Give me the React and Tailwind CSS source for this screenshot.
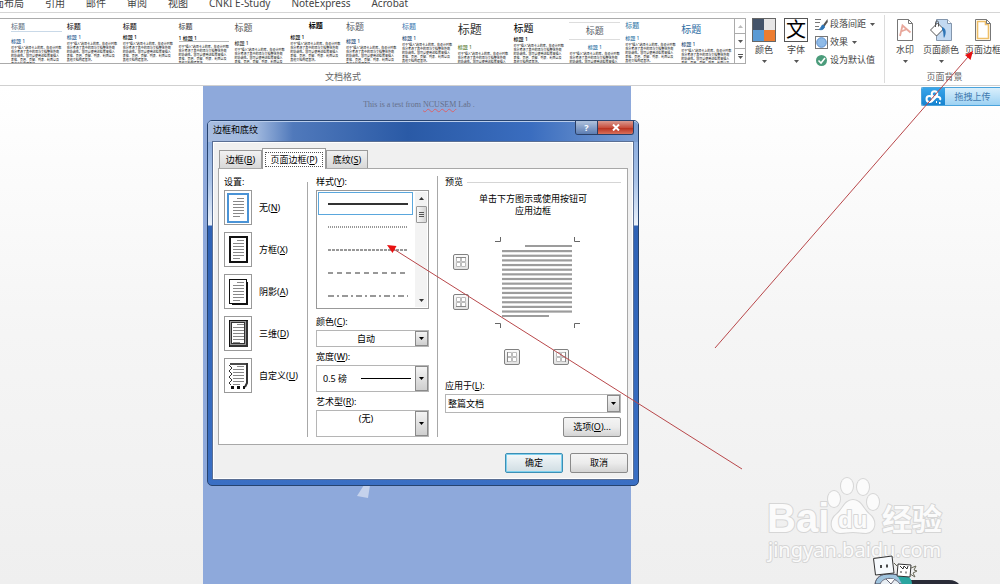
// src/App.jsx
/**
 * Word processor window: ribbon on top, document canvas below,
 * "Borders and Shading" dialog open over the page.
 */
import { useState } from "react";

const MENU = ["页面布局", "引用", "邮件", "审阅", "视图", "CNKI E-Study", "NoteExpress", "Acrobat"];

const SAMPLE =
  "对于“插入”选项卡上的库，在设计时都充分考虑了其中的项与文档整体外观的协调性。您可以使用这些库来插入表格、页眉、页脚、列表、封面以及其他文档构建基块。";

const THEMES = [
  { title: "mt-1 text-[7px] leading-[8px] text-[#5b6b80] border-b border-[#c9d9e8]", head: "mt-[6px] text-[#2e5f94]" },
  { title: "mt-1 text-[7px] leading-[8px] text-black", head: "mt-[3px] text-[#2e5f94]" },
  { title: "mt-1 text-[7px] leading-[8px] text-black", head: "mt-[3px] text-black" },
  { title: "mt-1 text-[7px] leading-[8px] text-[#333]", head: "mt-1 mb-px text-black border-b border-[#bbb]", num: true },
  { title: "mt-1 text-[9px] leading-[10px] text-[#555]", head: "mt-[7px] text-[#333]" },
  { title: "mt-[3px] text-[7px] leading-[8px] text-black font-bold text-center", head: "mt-1 text-black" },
  { title: "mt-[3px] text-[9px] leading-[10px] text-[#555a66]", head: "mt-[6px] text-[#1f4e79]" },
  { title: "mt-1 text-[7px] leading-[8px] text-[#3a76b0]", head: "mt-1 text-[#1f4e79]" },
  { title: "mt-[5px] text-[12px] leading-[12px] text-[#333]", head: "mt-2 text-[#5a7d35]" },
  { title: "mt-1 text-[10px] leading-[10px] text-black", head: "mt-[3px] text-black" },
  { title: "mt-[3px] text-[9px] leading-[16px] text-[#555a66] text-center border-y border-[#ddd]", head: "mt-1 text-[#2e74a5] text-center" },
  { title: "mt-[3px] text-[7px] leading-[8px] text-[#2e74a5]", head: "mt-[5px] text-[#2e74a5]" },
  { title: "mt-[5px] text-[10px] leading-[10px] text-[#2e6da4]", head: "mt-[7px] text-[#1f4e79]" },
];

const SETTINGS = [
  { id: "none", name: "无", k: "N" },
  { id: "box", name: "方框", k: "X" },
  { id: "shadow", name: "阴影", k: "A" },
  { id: "threeD", name: "三维", k: "D" },
  { id: "custom", name: "自定义", k: "U" },
];

const LINE_STYLES = [
  { id: "solid", dash: "none" },
  { id: "dotted", dash: "1 1" },
  { id: "short", dash: "3 1" },
  { id: "dash", dash: "5 4" },
  { id: "dashdot", dash: "6 3 2 3" },
];

function Caret({ className = "" }) {
  return (
    <svg width="5" height="3" viewBox="0 0 5 3" className={`shrink-0 ${className}`}>
      <path d="M0 0h5L2.5 3z" fill="currentColor" />
    </svg>
  );
}

// label with the access key underlined: 名称(K)
function Key({ name, k, end = "" }) {
  return (
    <>
      {name}(<u>{k}</u>){end}
    </>
  );
}

// ── Ribbon ───────────────────────────────────────────────────────────────

function ThemeThumb({ theme }) {
  return (
    <button className="min-w-0 overflow-hidden pl-[3px] pr-[2px] flex flex-col text-left">
      <span className={`w-full shrink-0 ${theme.title}`}>标题</span>
      <span className={`w-full shrink-0 text-[5px] leading-[6px] font-medium ${theme.head}`}>
        {theme.num ? "1 标题 1" : "标题 1"}
      </span>
      <span className="mt-[2px] text-[3px] leading-[4px] text-black">{SAMPLE}</span>
    </button>
  );
}

function BigButton({ label, icon, caret = true, className }) {
  return (
    <button className={`flex flex-col items-center shrink-0 pt-[3px] whitespace-nowrap ${className}`}>
      {icon}
      <span className="mt-[2px] leading-3">{label}</span>
      {caret && <Caret className="mt-1 text-[#555]" />}
    </button>
  );
}

function SmallButton({ label, icon, caret = true }) {
  return (
    <button className="flex h-[18px] items-center whitespace-nowrap">
      {icon}
      <span className="ml-[2px]">{label}</span>
      {caret && <Caret className="ml-1 text-[#555]" />}
    </button>
  );
}

const ColorsIcon = (
  <svg width="26" height="24" viewBox="0 0 26 24">
    <rect x="1" y="0" width="12" height="12" fill="#44546a" />
    <rect x="13" y="0" width="12" height="12" fill="#e7e6e6" />
    <rect x="1" y="12" width="12" height="12" fill="#5b9bd5" />
    <rect x="13" y="12" width="12" height="12" fill="#ed7d31" />
    <rect x="1.5" y=".5" width="23" height="23" fill="none" stroke="#666" />
  </svg>
);

const FontIcon = (
  <span className="flex h-6 w-6 items-center justify-center border border-[#555] bg-white text-[20px] leading-none text-black">
    文
  </span>
);

const SpacingIcon = (
  <svg width="13" height="13" viewBox="0 0 13 13">
    <path d="M0 1.5h6M0 4.5h5M0 8.5h4M0 11.5h4" stroke="#777" />
    <path d="M12.500 1L8 7l1.500 1.500L12.800 4z" fill="#555" />
    <path d="M8 7c-2 0-1 3-4 4.500 3 .8 5.500-.5 5.500-3z" fill="#2e75b6" stroke="#2e75b6" />
  </svg>
);

const EffectsIcon = (
  <svg width="13" height="13" viewBox="0 0 13 13">
    <rect x=".5" y=".5" width="12" height="12" fill="#fff" stroke="#777" />
    <circle cx="6.500" cy="6.500" r="4.800" fill="#8fbbe8" stroke="#5b8fd0" />
  </svg>
);

const CheckIcon = (
  <svg width="13" height="13" viewBox="0 0 13 13">
    <circle cx="6.500" cy="6.500" r="5.500" fill="#4b9c7b" />
    <path d="M3.500 6.500L6 9l4-5" fill="none" stroke="#fff" strokeWidth="1.600" />
  </svg>
);

const WatermarkIcon = (
  <svg width="20" height="24" viewBox="0 0 20 24">
    <path d="M2.500 1.500h11l4 4v17h-15z" fill="#fff" stroke="#777" />
    <path d="M13.500 1.500v4h4" fill="none" stroke="#777" />
    <path d="M5 18L7.500 7.500l8 7M6 13.500l5-2" fill="none" stroke="#e8a79b" strokeWidth="1.800" />
  </svg>
);

const PageColorIcon = (
  <svg width="24" height="24" viewBox="0 0 24 24">
    <path d="M7.500 1.500h11l4 4v17h-15z" fill="#c3d9f1" stroke="#8496ac" />
    <path d="M18.500 1.500v4h4" fill="#fff" stroke="#8496ac" />
    <path d="M1.500 12l7-7 6 6-7 7z" fill="#fff" stroke="#555" />
    <path d="M6.500 9V4.500c0-2 3-2 3 0v4" fill="none" stroke="#555" />
    <path d="M13 9c4 1 5 6 2 11-1-3 0-6-2-8z" fill="#2e75b6" />
  </svg>
);

const PageBorderIcon = (
  <svg width="20" height="24" viewBox="0 0 20 24">
    <path d="M2.500 1.500h11l4 4v17h-15z" fill="#fff" stroke="#777" />
    <path d="M4.500 3.500h8v3h3v14h-11z" fill="none" stroke="#eebf68" strokeWidth="1.600" />
    <path d="M13.500 1.500v4h4" fill="none" stroke="#777" />
  </svg>
);

function Ribbon() {
  return (
    <header className="border-b border-[#d0d0d0] bg-white text-[9px] text-[#444]">
      <nav className="-ml-4 flex h-[13px] gap-[21px] overflow-hidden border-b border-[#d5d5d5] text-[10px]">
        {MENU.map((m) => (
          <button key={m} className="-mt-[3px] h-3 shrink-0 leading-3">
            {m}
          </button>
        ))}
      </nav>

      <div className="flex overflow-hidden pb-[2px]">
        {/* ── Document formatting ───────────────────────────────────────── */}
        <section className="mt-[2px] min-w-0 flex-1 border-r border-[#dcdcdc]">
          <div className="flex h-[54px]">
            <div className="mt-[3px] flex h-[46px] min-w-0 flex-1 border border-l-0 border-[#ababab] bg-white">
              <div className="grid min-w-0 flex-1 overflow-hidden pl-2 [grid-template-columns:repeat(13,minmax(0,1fr))]">
                {THEMES.map((t, i) => (
                  <ThemeThumb key={i} theme={t} />
                ))}
              </div>
              <div className="flex w-[11px] flex-col divide-y divide-[#ababab] border-l border-[#ababab]">
                <button aria-label="上一行" className="flex flex-1 items-center justify-center text-[#bbb]">
                  <Caret className="rotate-180" />
                </button>
                <button aria-label="下一行" className="flex flex-1 items-center justify-center text-[#555]">
                  <Caret />
                </button>
                <button aria-label="其他" className="flex flex-1 flex-col items-center justify-center gap-px text-[#555]">
                  <span className="h-px w-[5px] bg-[#555]" />
                  <Caret />
                </button>
              </div>
            </div>
            <BigButton label="颜色" icon={ColorsIcon} className="ml-[2px] w-8" />
            <BigButton label="字体" icon={FontIcon} className="w-8" />
            <div className="ml-[3px] w-[69px] shrink-0">
              <SmallButton label="段落间距" icon={SpacingIcon} />
              <SmallButton label="效果" icon={EffectsIcon} />
              <SmallButton label="设为默认值" icon={CheckIcon} caret={false} />
            </div>
          </div>
          <p className="mt-[2px] pl-[325px] leading-3 text-[#666]">文档格式</p>
        </section>

        {/* ── Page background ───────────────────────────────────────────── */}
        <section className="mt-[2px] w-[115px] shrink-0 overflow-hidden">
          <div className="flex h-[54px] pl-[5px]">
            <BigButton label="水印" icon={WatermarkIcon} className="w-[30px]" />
            <BigButton label="页面颜色" icon={PageColorIcon} className="w-[42px]" />
            <BigButton label="页面边框" icon={PageBorderIcon} caret={false} className="w-[42px]" />
          </div>
          <p className="mt-[2px] pl-1 text-center leading-3 text-[#666]">页面背景</p>
        </section>
      </div>
    </header>
  );
}

// ── Dialog parts ─────────────────────────────────────────────────────────

function SettingIcon({ id }) {
  return (
    <svg width="26" height="33" viewBox="0 0 26 33">
      {id === "none" && <rect x="3" y="3" width="20" height="28" fill="#fff" stroke="#4a93d6" strokeWidth="2" />}
      {id === "box" && <rect x="5" y="4" width="17" height="25" fill="#fff" stroke="#111" strokeWidth="2" />}
      {id === "shadow" && (
        <>
          <path d="M7 29h15V7" fill="none" stroke="#111" strokeWidth="2" />
          <rect x="4.500" y="4.500" width="17" height="24" fill="#fff" stroke="#111" />
        </>
      )}
      {id === "threeD" && (
        <>
          <rect x="4.500" y="3.500" width="18" height="26" fill="#999" stroke="#111" />
          <rect x="6.500" y="5.500" width="13" height="21" fill="#fff" stroke="#333" />
          <path d="M5 29h17V4" fill="none" stroke="#333" strokeWidth="2" />
        </>
      )}
      {id === "custom" && (
        <>
          <path d="M5 5h17" stroke="#111" strokeWidth="1.500" />
          <path d="M22 4v20l-2 4" fill="none" stroke="#333" strokeWidth="2" />
          <path d="M4 6l3 3-3 3 3 3-3 3 3 3-3 3 2 2" fill="none" stroke="#333" />
          <path d="M6 28.500h14" stroke="#111" strokeWidth="3" strokeDasharray="3 3" />
        </>
      )}
      <path d="M12 7.500h7M8 10.500h11M8 13.500h11M8 16.500h11M8 19.500h11M8 22.500h11M8 25.500h7" stroke="#888" />
    </svg>
  );
}

function ComboArrow() {
  return (
    <span className="pointer-events-none flex w-[13px] shrink-0 items-center justify-center border border-[#8a8a8a] bg-linear-to-b from-[#f4f4f4] to-[#cfcfcf] text-black">
      <Caret />
    </span>
  );
}

function Combo({ id, label, options, className, selectClass, children }) {
  return (
    <div className="flex flex-col">
      <label htmlFor={id} className="mb-[2px] leading-3">
        {label}
      </label>
      <div className={`flex border border-[#b5b5b5] bg-white ${className}`}>
        <select id={id} className={`min-w-0 flex-1 appearance-none bg-transparent outline-none ${selectClass}`}>
          {options.map((o) => (
            <option key={o}>{o}</option>
          ))}
        </select>
        {children}
        <ComboArrow />
      </div>
    </div>
  );
}

function EdgeButton({ side, label }) {
  const edges = {
    top: "M2 2.500h10",
    bottom: "M2 11.500h10",
    left: "M2.500 2v10",
    right: "M11.500 2v10",
  };
  return (
    <button
      aria-label={label}
      className="flex h-4 w-4 items-center justify-center rounded-[2px] border border-[#808080] bg-linear-to-b from-[#fafafa] to-[#e2e2e2]"
    >
      <svg width="14" height="14" viewBox="0 0 14 14" className="shrink-0">
        <path d="M2.500 2.500h4v4h-4zM7.500 2.500h4v4h-4zM2.500 7.500h4v4h-4zM7.500 7.500h4v4h-4z" fill="#fff" stroke="#bbb" />
        <path d={edges[side]} stroke="#888" />
      </svg>
    </button>
  );
}

function PagePreview() {
  const rows = Array.from({ length: 14 }, (_, i) => 13 + i * 4.65);
  return (
    <svg width="85" height="91" viewBox="0 0 85 91" className="ml-[26px] shrink-0">
      <path d="M0 4.500h5.500V0M85 4.500h-5.500V0M0 86.500h5.500V91M85 86.500h-5.500V91" fill="none" stroke="#666" />
      <rect x="30" y="8" width="47" height="2" fill="#9c9c9c" />
      {rows.map((y) => (
        <rect key={y} x="7" y={y} width="70" height="2.200" fill="#9c9c9c" />
      ))}
      <rect x="7" y="78" width="47" height="2" fill="#9c9c9c" />
    </svg>
  );
}

function LineStyleList({ value, onChange }) {
  return (
    <div className="flex h-[119px] border border-[#999] bg-white p-px">
      <div role="listbox" aria-labelledby="style-label" className="flex-1">
        {LINE_STYLES.map((s) => (
          <button
            key={s.id}
            role="option"
            aria-label={s.id}
            aria-selected={value === s.id}
            onClick={() => onChange(s.id)}
            className={`flex h-[23px] w-full items-center justify-center border pl-1 ${value === s.id ? "border-[#5aa7dd]" : "border-transparent"}`}
          >
            <svg width="80" height="2" viewBox="0 0 80 2">
              <path d="M0 1h80" stroke="#333" strokeWidth={s.id === "solid" ? 2 : 1.2} strokeDasharray={s.dash} />
            </svg>
          </button>
        ))}
      </div>
      <div className="ml-[2px] flex w-3 flex-col items-center bg-[#f3f3f3] py-[5px]">
        <Caret className="rotate-180 text-[#333]" />
        <span className="mt-[6px] flex h-[17px] w-[11px] flex-col items-center justify-center gap-px rounded-[1px] border border-[#999] bg-linear-to-r from-[#f8f8f8] to-[#d5d5d5]">
          <i className="h-px w-[5px] bg-[#555]" />
          <i className="h-px w-[5px] bg-[#555]" />
          <i className="h-px w-[5px] bg-[#555]" />
        </span>
        <Caret className="mt-auto text-[#333]" />
      </div>
    </div>
  );
}

const BUTTON =
  "h-5 w-[58px] rounded-[2px] border border-[#8a8a8a] bg-linear-to-b from-[#f4f4f4] via-[#ececec] to-[#d4d4d4]";

function BordersDialog() {
  const [setting, setSetting] = useState("none");
  const [lineStyle, setLineStyle] = useState("solid");

  return (
    <div
      role="dialog"
      aria-labelledby="dialog-title"
      className="absolute left-[207px] top-[120px] w-[432px] rounded-[5px] border border-[#26436f] bg-[linear-gradient(180deg,#7fa3da_0,#a9c3e8_60px,#eaf1fa_104px,#2f62b5_105px,#3a6fc4_100%)] px-[5px] pb-[6px] text-[9px] text-black"
    >
      <div className="-mx-[5px] flex h-[21px] items-start rounded-t-[4px] border-t border-[#b9cdec] bg-[linear-gradient(90deg,#a7bcdf_0,#a0b8de_48px,#5079bb_85px,#2a5aa6_200px,#3a6dbf_75%,#7c9fd3_100%)] pl-[5px] pr-1">
        <h2 id="dialog-title" className="pt-[2px] leading-3">
          边框和底纹
        </h2>
        <div className="-mt-px ml-auto flex h-[14px] overflow-hidden rounded-b-[3px] border border-t-0 border-[#2a3f66] text-white">
          <button aria-label="帮助" className="flex w-[21px] items-center justify-center bg-linear-to-b from-[#b0c2dc] to-[#5c7db3] font-bold leading-none">
            ?
          </button>
          <button aria-label="关闭" className="flex w-9 items-center justify-center border-l border-[#2a3f66] bg-[linear-gradient(180deg,#d99a90_0,#c8503f_50%,#b52c1a_51%,#d9705a_100%)]">
            <svg width="8" height="7" viewBox="0 0 8 7">
              <path d="M1 .5l6 6M7 .5l-6 6" stroke="#fff" strokeWidth="2" />
            </svg>
          </button>
        </div>
      </div>

      <div className="border border-white bg-[#f0f0f0] px-1 pb-[5px] pt-[5px] outline outline-[#5a6f94]">
        {/* ── Tabs ──────────────────────────────────────────────────────── */}
        <div role="tablist" className="flex h-5 items-end pl-px">
          <button role="tab" className="h-[18px] w-[43px] border border-b-0 border-[#9a9a9a] bg-linear-to-b from-[#f2f2f2] to-[#d8d8d8]">
            <Key name="边框" k="B" />
          </button>
          <button role="tab" aria-selected="true" className="relative -mb-px h-[21px] w-16 border border-b-0 border-[#9a9a9a] bg-white p-[2px]">
            <span className="block border border-dotted border-[#555] leading-[13px]">
              <Key name="页面边框" k="P" />
            </span>
          </button>
          <button role="tab" className="h-[18px] w-[42px] border border-b-0 border-[#9a9a9a] bg-linear-to-b from-[#f2f2f2] to-[#d8d8d8]">
            <Key name="底纹" k="S" />
          </button>
        </div>

        <div className="flex border border-[#a8a8a8] bg-white py-[7px]">
          {/* ── Setting ─────────────────────────────────────────────────── */}
          <fieldset className="w-[89px] border-r border-[#a8a8a8] pl-[5px]">
            <legend className="mb-[2px] leading-3">设置:</legend>
            <div className="flex flex-col gap-[7px]">
              {SETTINGS.map((s) => (
                <label key={s.id} className="flex h-[35px] items-center gap-[7px]">
                  <input
                    type="radio"
                    name="setting"
                    className="sr-only"
                    checked={setting === s.id}
                    onChange={() => setSetting(s.id)}
                  />
                  <span className="border border-[#999] bg-white">
                    <SettingIcon id={s.id} />
                  </span>
                  <span>
                    <Key name={s.name} k={s.k} />
                  </span>
                </label>
              ))}
            </div>
          </fieldset>

          {/* ── Line style, colour, width, art ──────────────────────────── */}
          <div className="flex w-[130px] flex-col gap-1 border-r border-[#a8a8a8] px-2">
            <div className="mb-[3px]">
              <p id="style-label" className="mb-[2px] leading-3">
                <Key name="样式" k="Y" end=":" />
              </p>
              <LineStyleList value={lineStyle} onChange={setLineStyle} />
            </div>
            <Combo
              id="color"
              label={<Key name="颜色" k="C" end=":" />}
              options={["自动"]}
              className="h-[17px]"
              selectClass="[text-align-last:center]"
            />
            <Combo
              id="width"
              label={<Key name="宽度" k="W" end=":" />}
              options={["0.5 磅"]}
              className="h-[27px]"
              selectClass="pl-[6px]"
            >
              <span className="mr-1 h-px w-[50px] self-center bg-black" />
            </Combo>
            <Combo
              id="art"
              label={<Key name="艺术型" k="R" end=":" />}
              options={["(无)"]}
              className="h-[27px]"
              selectClass="pb-[9px] [text-align-last:center]"
            />
          </div>

          {/* ── Preview ─────────────────────────────────────────────────── */}
          <div className="flex min-w-0 flex-1 flex-col pl-[7px] pr-[6px]">
            <div className="flex items-center gap-1 leading-3">
              <span>预览</span>
              <span className="h-px flex-1 bg-[#d5d5d5]" />
            </div>
            <p className="mt-[5px] px-8 text-center leading-3">单击下方图示或使用按钮可应用边框</p>
            <div className="mt-5 flex pl-2">
              <div className="flex flex-col gap-6 pt-[17px]">
                <EdgeButton side="top" label="上框线" />
                <EdgeButton side="bottom" label="下框线" />
              </div>
              <PagePreview />
            </div>
            <div className="mb-[15px] mt-[21px] flex gap-[33px] pl-[59px]">
              <EdgeButton side="left" label="左框线" />
              <EdgeButton side="right" label="右框线" />
            </div>
            <Combo
              id="apply"
              label={<Key name="应用于" k="L" end=":" />}
              options={["整篇文档"]}
              className="h-[19px]"
              selectClass="pl-[2px]"
            />
            <button className={`mt-1 self-end ${BUTTON}`}>
              <Key name="选项" k="O" end="..." />
            </button>
          </div>
        </div>

        <div className="mt-2 flex justify-end gap-[7px]">
          <button className="h-5 w-[58px] rounded-[2px] border border-[#3c8fb5] bg-linear-to-b from-[#f4f8fa] to-[#d0dde3] ring-1 ring-inset ring-[#7fd0ee]">
            确定
          </button>
          <button className={BUTTON}>取消</button>
        </div>
      </div>
    </div>
  );
}

// ── Floating extras ──────────────────────────────────────────────────────

function UploadWidget() {
  return (
    <button className="absolute right-0 top-[87px] flex h-[19px] w-[79px] overflow-hidden rounded-l-[2px] border border-r-0 border-[#4aa3dc] text-[9px] text-[#3f78ad]">
      <span className="flex h-full w-[23px] items-center justify-center bg-linear-to-b from-[#38a5ea] to-[#1583d0]">
        <svg width="17" height="14" viewBox="0 0 17 14" fill="none" stroke="#fff" strokeWidth="2">
          <circle cx="4.500" cy="9" r="3" />
          <circle cx="9.500" cy="4" r="2.800" />
          <path d="M7 11L11 7c3-1 5 1 4 3M11 12h1M14 13h1.500" />
        </svg>
      </span>
      <span className="flex h-full flex-1 items-center justify-center bg-linear-to-b from-[#d9effc] to-[#9dd2f3]">拖拽上传</span>
    </button>
  );
}

function Watermark() {
  return (
    <svg width="190" height="94" viewBox="0 0 190 94" className="absolute right-[54px] top-[474px]">
      <g fill="#fbfbfb" stroke="#d6d6d6" strokeWidth="2" paintOrder="stroke" strokeLinejoin="round">
        <text x="11" y="58" fontFamily="Liberation Sans, sans-serif" fontWeight="bold" fontSize="40">
          Bai
        </text>
        <ellipse cx="78" cy="25" rx="6" ry="8" />
        <ellipse cx="91" cy="12" rx="6" ry="8" />
        <ellipse cx="107" cy="13" rx="6" ry="8" />
        <ellipse cx="117" cy="28" rx="6" ry="8" />
        <path d="M97 26c-8 0-10 9-16 14-8 6-7 18 3 19 5 0 8-1 13-1s8 1 13 1c10-1 11-13 3-19-6-5-8-14-16-14z" />
        <text x="82" y="54" fontFamily="Liberation Sans, sans-serif" fontWeight="bold" fontSize="24">
          du
        </text>
        <text x="126" y="56" fontFamily="Noto Sans CJK SC, sans-serif" fontWeight="bold" fontSize="30">
          经验
        </text>
        <text x="12" y="83" fontFamily="Noto Sans, sans-serif" fontSize="20">
          jingyan.baidu.com
        </text>
      </g>
    </svg>
  );
}

function Mascot() {
  return (
    <svg width="90" height="30" viewBox="0 0 90 30" className="absolute bottom-0 right-[40px]">
      <path d="M14 30c2-3 5-4 10-4h55c5 0 8 2 10 4z" fill="#2a2c38" />
      <path d="M5 30c1-7 6-10 14-10 10 0 20 2 22 10z" fill="#9fc3dd" stroke="#445" />
      <path d="M27 21c8-2 15 2 15 9H32z" fill="#2aa5a0" />
      <path d="M10 30c3-7 14-8 20 0" fill="#e8eef3" stroke="#667" />
      <path d="M16 25l5 5 4-5" fill="#fff" stroke="#667" />
      <path d="M3.500 4.500L22 2l2 17-18.500 2z" fill="#f7fafd" stroke="#333" />
      <path d="M11 11v3M17 10.500v3" stroke="#111" strokeWidth="1.500" />
      <path d="M28 10l13 1-1 12-13-1z" fill="#fff" stroke="#333" />
      <path d="M30 12l3 3 1-3 3 3 1-3M31 17v2M36 17.500v2" stroke="#333" fill="none" />
      <path d="M41 14l5-2-2 4 3 1-4 2 2 4-5-3M27 12l-3-3" stroke="#665" fill="none" />
    </svg>
  );
}

function Arrows() {
  return (
    <svg className="pointer-events-none absolute inset-0 h-full w-full" aria-hidden="true">
      <path d="M715 348L968 57M742 469L392 248" stroke="#b8474a" fill="none" />
      <path d="M973 51l-2.500 9-5.500-5zM387 245l9.500 1-4 7z" fill="#e81111" />
    </svg>
  );
}

export default function App() {
  return (
    <div className="relative flex h-screen flex-col overflow-hidden bg-[#f1f1f1] font-['Noto_Sans','Noto_Sans_CJK_SC',sans-serif]">
      <Ribbon />

      <main className="flex flex-1 bg-linear-to-b from-white via-[#f5f5f5] to-[#efefef] pl-[203px]">
        <article className="flex w-[428px] flex-col items-center bg-[#8ea9db]">
          <p className="mt-[13px] pl-1 font-['Liberation_Serif',serif] text-[8px] leading-3 text-[#66708a]">
            This is a test from{" "}
            <span className="underline decoration-[#d8636b] decoration-wavy decoration-1">NCUSEM</span> Lab .
          </p>
          <svg width="14" height="14" viewBox="0 0 14 14" className="mr-[106px] mt-[374px]">
            <path d="M7 0h6l-2 13-11-2z" fill="#c5d2ec" />
          </svg>
        </article>
      </main>

      <UploadWidget />
      <Watermark />
      <Mascot />
      <BordersDialog />
      <Arrows />
    </div>
  );
}
